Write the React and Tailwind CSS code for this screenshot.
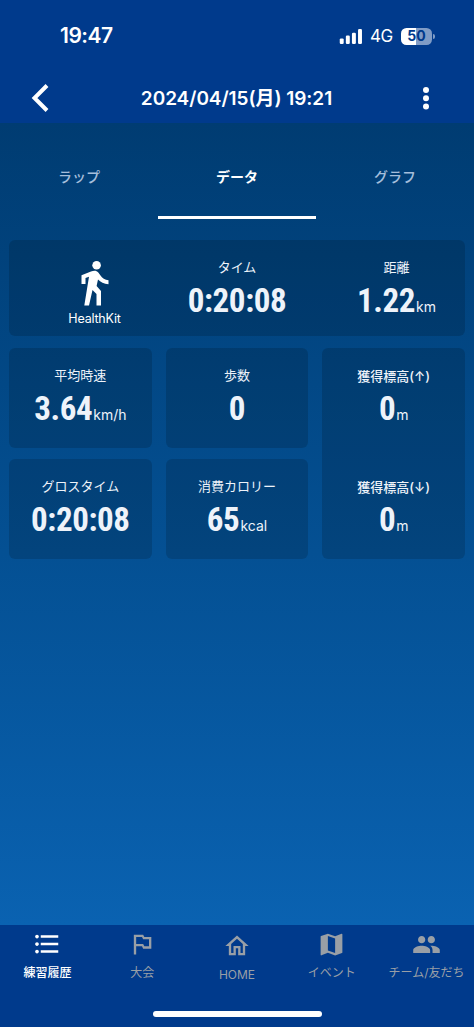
import React from 'react';
import {
  MdFormatListBulleted,
  MdGroup,
  MdMap,
  MdOutlinedFlag,
  MdOutlineHome,
} from 'react-icons/md';

const tabs = [
  { label: 'ラップ' },
  { label: 'データ', active: true },
  { label: 'グラフ' },
];

const navItems = [
  { label: '練習履歴', icon: MdFormatListBulleted, size: 30, active: true },
  { label: '大会', icon: MdOutlinedFlag, size: 28 },
  { label: 'HOME', icon: MdOutlineHome, size: 28, offset: true },
  { label: 'イベント', icon: MdMap, size: 29 },
  { label: 'チーム/友だち', icon: MdGroup, size: 29 },
];

const StatusBar = () => (
  <div className="flex h-[72px] items-center justify-between pl-[60px] pr-[39px]">
    <span className="text-[21px] font-semibold leading-6 tracking-[-0.5px]">19:47</span>
    <div className="flex items-center">
      <svg width="24" height="15" viewBox="0 0 24 16" fill="currentColor" aria-hidden="true">
        <rect x="0" y="10" width="4.2" height="6" rx="1.3" />
        <rect x="6.5" y="7" width="4.2" height="9" rx="1.3" />
        <rect x="13" y="4" width="4.2" height="12" rx="1.3" />
        <rect x="19.5" y="0" width="4.2" height="16" rx="1.3" />
      </svg>
      <span className="ml-[7px] text-[17px] leading-6 tracking-[-0.3px]">4G</span>
      <div className="ml-[8px] flex h-[17px] w-[31px] items-center justify-center rounded-[5.5px] bg-linear-to-r from-white from-50% to-[#809cc6] to-50% text-[14px] font-bold leading-none text-[#003a8c]">
        50
      </div>
      <div className="ml-px h-[5px] w-[2px] rounded-r-full bg-[#809cc6]" />
    </div>
  </div>
);

const WalkIcon = () => (
  <svg width="28" height="46" viewBox="0 0 28 46" fill="currentColor" aria-hidden="true">
    <circle cx="15.6" cy="5.2" r="4.3" />
    <path d="M10 11.5.5 15.2V24h4v-6l3.5-1.2L3.3 45.5H8L11.5 30l4 4v11.5H20V31l-4.400-5L17 19.500c2.500 2.500 6 4.500 10.500 4.800v-4.100c-3.500-.4-6.500-2.200-8-4.700l-2.200-3c-1.800-2.200-4.300-2.200-7.300-1z" />
  </svg>
);

const MoreIcon = () => (
  <svg width="8" height="24" viewBox="0 0 8 24" fill="currentColor" aria-hidden="true">
    <circle cx="4" cy="4" r="3" />
    <circle cx="4" cy="12.2" r="3" />
    <circle cx="4" cy="20.4" r="3" />
  </svg>
);

const Stat = ({ label, value, unit, bold = false }) => (
  <div className="flex flex-col items-center text-[#eef3fa]">
    <span className={bold ? 'pt-px text-[13px] font-medium leading-[19px]' : 'pb-px text-[13px] leading-[19px]'}>
      {label}
    </span>
    <span className="flex items-baseline whitespace-nowrap">
      <span className="font-['Roboto_Condensed','Roboto',sans-serif] text-[33px] font-bold leading-[46px] tracking-[-0.4px] [font-stretch:75%]">
        {value}
      </span>
      {unit && <span className="ml-px text-[14px]">{unit}</span>}
    </span>
  </div>
);

const cardClass = 'rounded-[6px] bg-black/15';

const App = () => (
  <div className="flex h-[1027px] w-[474px] flex-col overflow-hidden bg-linear-to-b from-[#003c72] from-12% to-[#0a62b1] to-90% font-['Inter','Noto_Sans_CJK_JP',sans-serif] text-white">
    <header className="h-[123px] shrink-0 bg-[#003a8c]">
      <StatusBar />
      <div className="flex h-[52px] items-center justify-between pl-[31px] pr-[44px]">
        <button type="button" aria-label="戻る" className="w-[20px]">
          <svg width="19" height="28" viewBox="0 0 19 28" fill="none" stroke="currentColor" strokeWidth="4">
            <path d="M16 1.5 3.5 14 16 26.5" />
          </svg>
        </button>
        <h1 className="pt-px text-[19px] font-semibold leading-6 tracking-[-0.05px]">2024/04/15(月) 19:21</h1>
        <button type="button" aria-label="メニュー">
          <MoreIcon />
        </button>
      </div>
    </header>

    <main className="flex-1">
      <nav className="flex h-[96px]">
        {tabs.map(({ label, active }) => (
          <button
            key={label}
            type="button"
            className={
              active
                ? 'flex-1 border-b-[3px] border-white pt-[14px] text-[14px] font-bold'
                : 'flex-1 border-b-[3px] border-transparent pt-[14px] text-[14px] font-medium text-[#a5bedb]'
            }
          >
            {label}
          </button>
        ))}
      </nav>

      <section className="mx-[9px] mt-[21px]">
        <div className={`${cardClass} grid h-[96px] grid-cols-3 pt-[18px]`}>
          <div className="flex flex-col items-center pl-[19px] pt-[2px]">
            <WalkIcon />
            <span className="mt-[5px] text-[12.5px] leading-4 tracking-[-0.2px]">HealthKit</span>
          </div>
          <Stat label="タイム" value="0:20:08" />
          <div className="pl-[15px]">
            <Stat label="距離" value="1.22" unit="km" />
          </div>
        </div>

        <div className="mt-3 grid grid-cols-3 grid-rows-[100px_100px] gap-x-[14px] gap-y-[11px]">
          <div className={`${cardClass} pt-[18px]`}>
            <Stat label="平均時速" value="3.64" unit="km/h" />
          </div>
          <div className={`${cardClass} pt-[18px]`}>
            <Stat label="歩数" value="0" />
          </div>
          <div className={`${cardClass} row-span-2 flex flex-col gap-[45px] pt-[18px]`}>
            <Stat label="獲得標高(↑)" value="0" unit="m" bold />
            <Stat label="獲得標高(↓)" value="0" unit="m" bold />
          </div>
          <div className={`${cardClass} pt-[18px]`}>
            <Stat label="グロスタイム" value="0:20:08" />
          </div>
          <div className={`${cardClass} pt-[18px]`}>
            <Stat label="消費カロリー" value="65" unit="kcal" />
          </div>
        </div>
      </section>
    </main>

    <footer className="flex h-[102px] shrink-0 flex-col items-center bg-[#003a8c]">
      <nav className="grid h-[86px] w-full grid-cols-5">
        {navItems.map(({ label, icon: Icon, size, active, offset }) => (
          <button
            key={label}
            type="button"
            className={`flex flex-col items-center whitespace-nowrap text-[12px] ${
              active ? 'font-medium text-white' : 'text-[#999fa6]'
            } ${offset ? 'pt-[2px]' : ''}`}
          >
            <span className="flex h-[38px] items-center">
              <Icon size={size} />
            </span>
            <span className="leading-[19px]">{label}</span>
          </button>
        ))}
      </nav>
      <div className="h-[6px] w-[169px] rounded-full bg-white" />
    </footer>
  </div>
);

export default App;
